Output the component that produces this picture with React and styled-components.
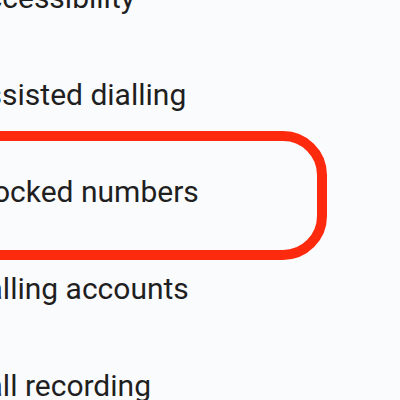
import { styled, createGlobalStyle } from "styled-components";

const GlobalStyle = createGlobalStyle`
	html, body {
		margin: 0;
		padding: 0;
		background: #fafbfd;
		overflow: hidden;
	}
`;

const settings = [
	{ id: "accessibility", label: "Accessibility" },
	{ id: "assisted", label: "Assisted dialling" },
	{ id: "blocked", label: "Blocked numbers", highlighted: true },
	{ id: "accounts", label: "Calling accounts" },
	{ id: "recording", label: "Call recording" },
];

export default function App() {
	return (
		<>
			<GlobalStyle />
			<Screen>
				<SettingsList>
					{settings.map((item) => (
						<SettingsRow key={item.id} $highlighted={item.highlighted}>
							<RowLabel>{item.label}</RowLabel>
						</SettingsRow>
					))}
				</SettingsList>
			</Screen>
		</>
	);
}

const Screen = styled.main`
	width: 400px;
	height: 400px;
	overflow: hidden;
	background: #fafbfd;
`;

const SettingsList = styled.ul`
	list-style: none;
	margin: -51px 0 0 -33px;
	padding: 0;
	display: flex;
	flex-direction: column;
`;

const SettingsRow = styled.li`
	position: relative;
	height: 97px;
	display: flex;
	align-items: center;

	&::after {
		content: "";
		display: ${(p) => (p.$highlighted ? "block" : "none")};
		position: absolute;
		top: -12px;
		bottom: -20px;
		left: -80px;
		right: 73px;
		border: 10.5px solid #fd2a0e;
		border-radius: 44px;
		pointer-events: none;
	}
`;

const RowLabel = styled.span`
	font-family: Roboto, "Liberation Sans", sans-serif;
	font-size: 30px;
	font-weight: 400;
	line-height: 97px;
	color: #1f1f1f;
	white-space: nowrap;
`;
